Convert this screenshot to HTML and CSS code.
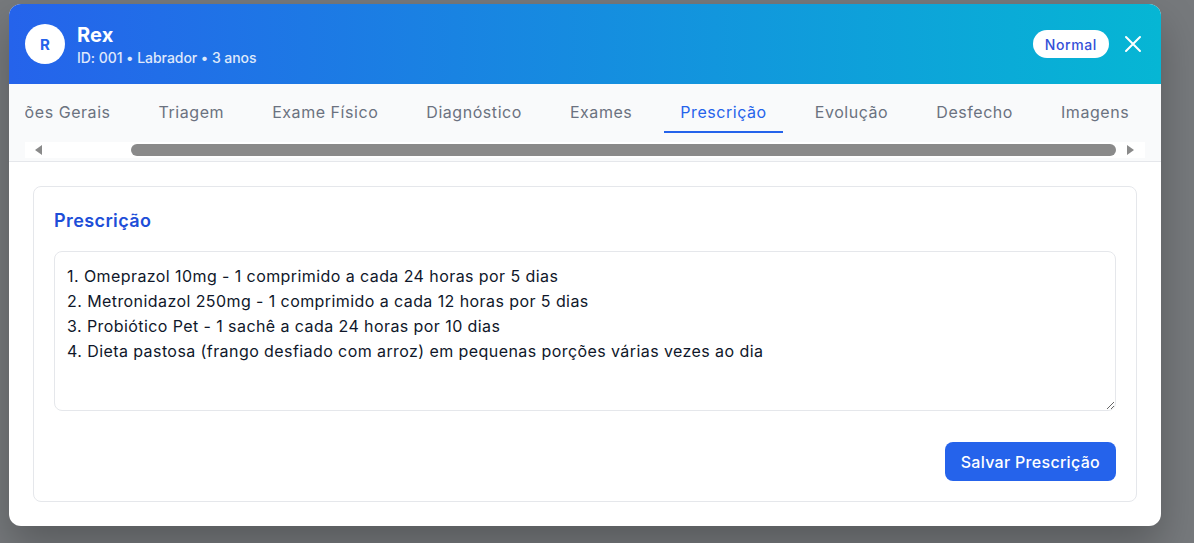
FILE: index.html
```html
<!DOCTYPE html>
<html lang="pt-BR">
<head>
<meta charset="utf-8">
<title>Rex - Prescrição</title>
<link rel="stylesheet" href="styles.css">
</head>
<body>
<div class="modal">
  <header class="modal-header">
    <div class="pet">
      <div class="avatar">R</div>
      <div class="pet-info">
        <div class="pet-name">Rex</div>
        <div class="pet-meta">ID: 001 • Labrador • 3 anos</div>
      </div>
    </div>
    <div class="header-actions">
      <span class="badge">Normal</span>
      <button class="close" aria-label="Fechar">
        <svg width="24" height="24" viewBox="0 0 24 24" fill="none" stroke="currentColor" stroke-width="2" stroke-linecap="round"><path d="M5 5L19 19M19 5L5 19"/></svg>
      </button>
    </div>
  </header>
  <nav class="tabbar">
    <div class="tabs-scroll" id="tabs">
      <div class="tabs">
        <button class="tab">Informações Gerais</button>
        <button class="tab">Triagem</button>
        <button class="tab">Exame Físico</button>
        <button class="tab">Diagnóstico</button>
        <button class="tab">Exames</button>
        <button class="tab active">Prescrição</button>
        <button class="tab">Evolução</button>
        <button class="tab">Desfecho</button>
        <button class="tab">Imagens</button>
      </div>
    </div>
    <div class="hscroll" aria-hidden="true">
      <span class="hs-btn hs-left"><svg width="7" height="10" viewBox="0 0 7 10"><path d="M7 0V10L0 5Z" fill="#8a8a8a"/></svg></span>
      <span class="hs-track"><span class="hs-thumb"></span></span>
      <span class="hs-btn hs-right"><svg width="7" height="10" viewBox="0 0 7 10"><path d="M0 0V10L7 5Z" fill="#8a8a8a"/></svg></span>
    </div>
  </nav>
  <main class="content">
    <section class="card">
      <h2 class="card-title">Prescrição</h2>
      <textarea class="rx">1. Omeprazol 10mg - 1 comprimido a cada 24 horas por 5 dias
2. Metronidazol 250mg - 1 comprimido a cada 12 horas por 5 dias
3. Probiótico Pet - 1 sachê a cada 24 horas por 10 dias
4. Dieta pastosa (frango desfiado com arroz) em pequenas porções várias vezes ao dia</textarea>
      <div class="actions">
        <button class="save">Salvar Prescrição</button>
      </div>
    </section>
  </main>
</div>
<script src="script.js"></script>
</body>
</html>
```

FILE: styles.css
```css
* { box-sizing: border-box; }
html, body { margin: 0; }
body {
  background: #76797c;
  font-family: Inter, "Noto Sans", sans-serif;
  padding: 4px 33px 16px 9px;
  height: 543px;
  overflow: hidden;
}
.modal {
  width: 1152px;
  background: #fff;
  border-radius: 12px;
  overflow: hidden;
  box-shadow: 0 20px 40px rgba(0,0,0,0.25);
}
.modal-header {
  height: 80px;
  padding: 0 16px;
  display: flex;
  align-items: center;
  justify-content: space-between;
  background: linear-gradient(to right, #2563eb, #06b6d4);
  color: #fff;
}
.pet { display: flex; align-items: center; gap: 12px; }
.avatar {
  width: 40px; height: 40px; border-radius: 50%;
  background: #fff; color: #2563eb;
  display: flex; align-items: center; justify-content: center;
  font-weight: 700; font-size: 15px;
}
.pet-info { padding-top: 2px; }
.pet-name { font-size: 20px; font-weight: 700; line-height: 26px; letter-spacing: 0.2px; }
.pet-meta { font-size: 14px; line-height: 20px; opacity: 0.85; font-weight: 500; letter-spacing: -0.05px; }
.header-actions { display: flex; align-items: center; gap: 12px; }
.badge {
  background: #fff; color: #3450d8;
  font-size: 14px; font-weight: 500;
  letter-spacing: 0.6px;
  height: 28px; padding: 0 12px;
  border-radius: 999px;
  display: inline-flex; align-items: center;
}
.close {
  background: none; border: 0; padding: 0; color: #fff;
  width: 24px; height: 24px; display: flex;
}
.tabbar {
  background: #f9fafb;
  border-bottom: 1px solid #e5e7eb;
  padding: 16px 16px 3px;
}
.tabs-scroll {
  overflow-x: auto;
  scrollbar-width: none;
}
.tabs {
  display: flex;
  gap: 16px;
  padding-bottom: 9px;
  width: max-content;
}
.tab {
  background: none; border: 0;
  border-bottom: 2px solid transparent;
  padding: 0 16px 7px;
  font-family: inherit;
  font-size: 16px; line-height: 24px;
  letter-spacing: 0.55px;
  color: #6b7280;
  white-space: nowrap;
}
.tab.active { color: #2563eb; border-bottom-color: #2563eb; }
.hscroll {
  display: flex;
  height: 16px;
  background: #fff;
}
.hs-btn { display: flex; align-items: center; justify-content: center; }
.hs-left { width: 27px; }
.hs-right { width: 29px; }
.hs-track { flex: 1; display: flex; align-items: center; padding-left: 79px; }
.hs-thumb { flex: 1; height: 12px; border-radius: 6px; background: #8a8a8a; }
.content { padding: 24px; }
.card {
  border: 1px solid #e5e7eb;
  border-radius: 8px;
  padding: 20px;
}
.card-title {
  margin: 0 0 16px;
  font-size: 18px; line-height: 28px; font-weight: 600;
  letter-spacing: 0.4px;
  color: #1d4ed8;
}
.rx {
  display: block;
  width: 100%;
  height: 160px;
  border: 1px solid #e5e7eb;
  border-radius: 8px;
  padding: 12px;
  font-family: inherit;
  font-size: 16px; line-height: 25px;
  letter-spacing: 0.42px;
  color: #0f172a;
  resize: vertical;
}
.actions { display: flex; justify-content: flex-end; margin-top: 31px; }
.save {
  background: #2563eb; color: #fff; border: 0;
  border-radius: 8px;
  height: 39px; padding: 0 16px;
  font-family: inherit; font-size: 16px; font-weight: 500;
  letter-spacing: 0.3px;
}
```

FILE: script.js
```js
var t = document.getElementById('tabs');
t.scrollLeft = t.scrollWidth;
```
